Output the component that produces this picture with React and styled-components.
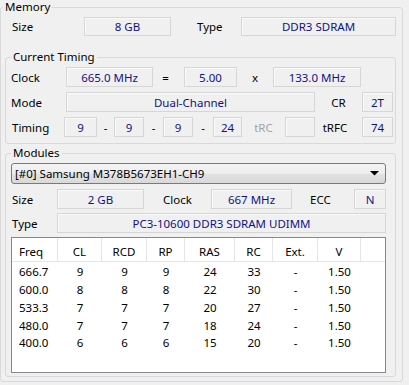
import styled, { createGlobalStyle } from 'styled-components';

const GlobalStyle = createGlobalStyle`
  html, body {
    margin: 0;
    padding: 0;
    background: #f0f0f0;
  }
  body {
    font-family: 'Noto Sans', 'Liberation Sans', sans-serif;
    font-size: 11.5px;
    color: #000;
  }
`;

const COLS = '46px 44px 45px 38px 50px 38px 45px 43px 1fr';

const Page = styled.div`
  width: 409px;
  height: 385px;
  overflow: hidden;
`;

const Group = styled.fieldset`
  box-sizing: border-box;
  width: ${(p) => p.$w}px;
  min-width: 0;
  margin: ${(p) => p.$mt || 0}px 0 0 0;
  padding: ${(p) => p.$pad};
  border: 1px solid #d9d9d9;
  border-radius: 3px;
`;

const Legend = styled.legend`
  padding: 0 2px;
  margin-left: ${(p) => p.$ml || 0}px;
  line-height: 14px;
`;

const Row = styled.div`
  display: flex;
  align-items: center;
  height: ${(p) => p.$h || 20}px;
  margin-top: ${(p) => p.$mt || 0}px;
  white-space: nowrap;
`;

const Label = styled.span`
  flex: none;
  box-sizing: border-box;
  width: ${(p) => p.$w}px;
  margin-left: ${(p) => p.$ml || 0}px;
  padding-left: ${(p) => p.$pl || 0}px;
  text-align: ${(p) => (p.$center ? 'center' : 'left')};
  color: ${(p) => (p.$dim ? '#a3a3a3' : '#000')};
`;

const Field = styled.div`
  flex: ${(p) => (p.$w ? 'none' : '1')};
  box-sizing: border-box;
  width: ${(p) => (p.$w ? `${p.$w}px` : 'auto')};
  height: 100%;
  margin-left: ${(p) => p.$ml || 0}px;
  display: flex;
  align-items: center;
  justify-content: center;
  border: 1px solid #d6d6d6;
  box-shadow: inset 1px 1px 0 #fafafa;
  color: #10108c;
`;

const Select = styled.div`
  box-sizing: border-box;
  height: 21px;
  display: flex;
  align-items: center;
  justify-content: space-between;
  padding: 0 6px 0 3px;
  border: 1px solid #7a7a7a;
  border-radius: 3px;
  background: linear-gradient(#f4f4f4, #ededed 50%, #e2e2e2 50%, #d9d9d9);
`;

const Table = styled.div`
  box-sizing: border-box;
  height: 136px;
  margin-top: 4px;
  border: 1px solid #828790;
  background: #fff;
`;

const HeadRow = styled.div`
  display: grid;
  grid-template-columns: ${COLS};
  box-sizing: border-box;
  height: 24px;
  border-bottom: 1px solid #e5e5e5;
`;

const HeadCell = styled.div`
  display: flex;
  align-items: center;
  justify-content: ${(p) => (p.$left ? 'flex-start' : 'center')};
  padding: 3px 0 0 ${(p) => (p.$left ? 7 : 0)}px;
  border-right: 1px solid #e5e5e5;
  &:last-child {
    border-right: none;
  }
`;

const Body = styled.div`
  padding-top: 1px;
`;

const DataRow = styled.div`
  display: grid;
  grid-template-columns: ${COLS};
  height: 17.75px;
  align-items: center;
`;

const Cell = styled.span`
  text-align: ${(p) => (p.$left ? 'left' : 'center')};
  padding-left: ${(p) => (p.$left ? 7 : 0)}px;
`;

const headers = ['Freq', 'CL', 'RCD', 'RP', 'RAS', 'RC', 'Ext.', 'V'];

const rows = [
  ['666.7', 9, 9, 9, 24, 33, '-', '1.50'],
  ['600.0', 8, 8, 8, 22, 30, '-', '1.50'],
  ['533.3', 7, 7, 7, 20, 27, '-', '1.50'],
  ['480.0', 7, 7, 7, 18, 24, '-', '1.50'],
  ['400.0', 6, 6, 6, 15, 20, '-', '1.50'],
];

function Arrow() {
  return (
    <svg width="9" height="5" viewBox="0 0 9 5">
      <polygon points="0,0 9,0 4.5,4.5" fill="#000" />
    </svg>
  );
}

export default function App() {
  return (
    <Page>
      <GlobalStyle />
      <Group $w={403} $pad="3px 6px 4px 4px">
        <Legend $ml={-2}>Memory</Legend>
        <Row $h={19}>
          <Label $w={79} $pl={7}>Size</Label>
          <Field $w={87}>8 GB</Field>
          <Label $w={44} $ml={26}>Type</Label>
          <Field $w={155}>DDR3 SDRAM</Field>
        </Row>

        <Group $w={391} $mt={14} $pad="3px 2px 6px 5px">
          <Legend>Current Timing</Legend>
          <Row>
            <Label $w={55}>Clock</Label>
            <Field $w={87}>665.0 MHz</Field>
            <Label $w={25} $center>=</Label>
            <Field $w={53} $ml={6}>5.00</Field>
            <Label $w={36} $center>x</Label>
            <Field $w={88}>133.0 MHz</Field>
          </Row>
          <Row $mt={5}>
            <Label $w={55}>Mode</Label>
            <Field $w={249}>Dual-Channel</Field>
            <Label $w={47} $center>CR</Label>
            <Field $w={31}>2T</Field>
          </Row>
          <Row $mt={5}>
            <Label $w={53} $pl={1}>Timing</Label>
            <Field $w={33}>9</Field>
            <Label $w={17} $center>-</Label>
            <Field $w={30}>9</Field>
            <Label $w={19} $center>-</Label>
            <Field $w={30}>9</Field>
            <Label $w={20} $center>-</Label>
            <Field $w={29}>24</Field>
            <Label $w={43} $center $dim>tRC</Label>
            <Field $w={30} />
            <Label $w={40} $center>tRFC</Label>
            <Field $w={31} $ml={7}>74</Field>
          </Row>
        </Group>

        <Group $w={391} $mt={2} $pad="3px 9px 3px 5px">
          <Legend>Modules</Legend>
          <Select>
            <span>[#0] Samsung M378B5673EH1-CH9</span>
            <Arrow />
          </Select>
          <Row $mt={5}>
            <Label $w={46} $pl={1}>Size</Label>
            <Field $w={87}>2 GB</Field>
            <Label $w={48} $ml={19}>Clock</Label>
            <Field $w={81}>667 MHz</Field>
            <Label $w={44} $ml={18}>ECC</Label>
            <Field $w={32}>N</Field>
          </Row>
          <Row $mt={4}>
            <Label $w={46} $pl={1}>Type</Label>
            <Field>PC3-10600 DDR3 SDRAM UDIMM</Field>
          </Row>
          <Table>
            <HeadRow>
              {headers.map((h, i) => (
                <HeadCell key={h} $left={i === 0}>
                  {h}
                </HeadCell>
              ))}
              <HeadCell />
            </HeadRow>
            <Body>
              {rows.map((r) => (
                <DataRow key={r[0]}>
                  {r.map((v, i) => (
                    <Cell key={i} $left={i === 0}>
                      {v}
                    </Cell>
                  ))}
                </DataRow>
              ))}
            </Body>
          </Table>
        </Group>
      </Group>
    </Page>
  );
}
